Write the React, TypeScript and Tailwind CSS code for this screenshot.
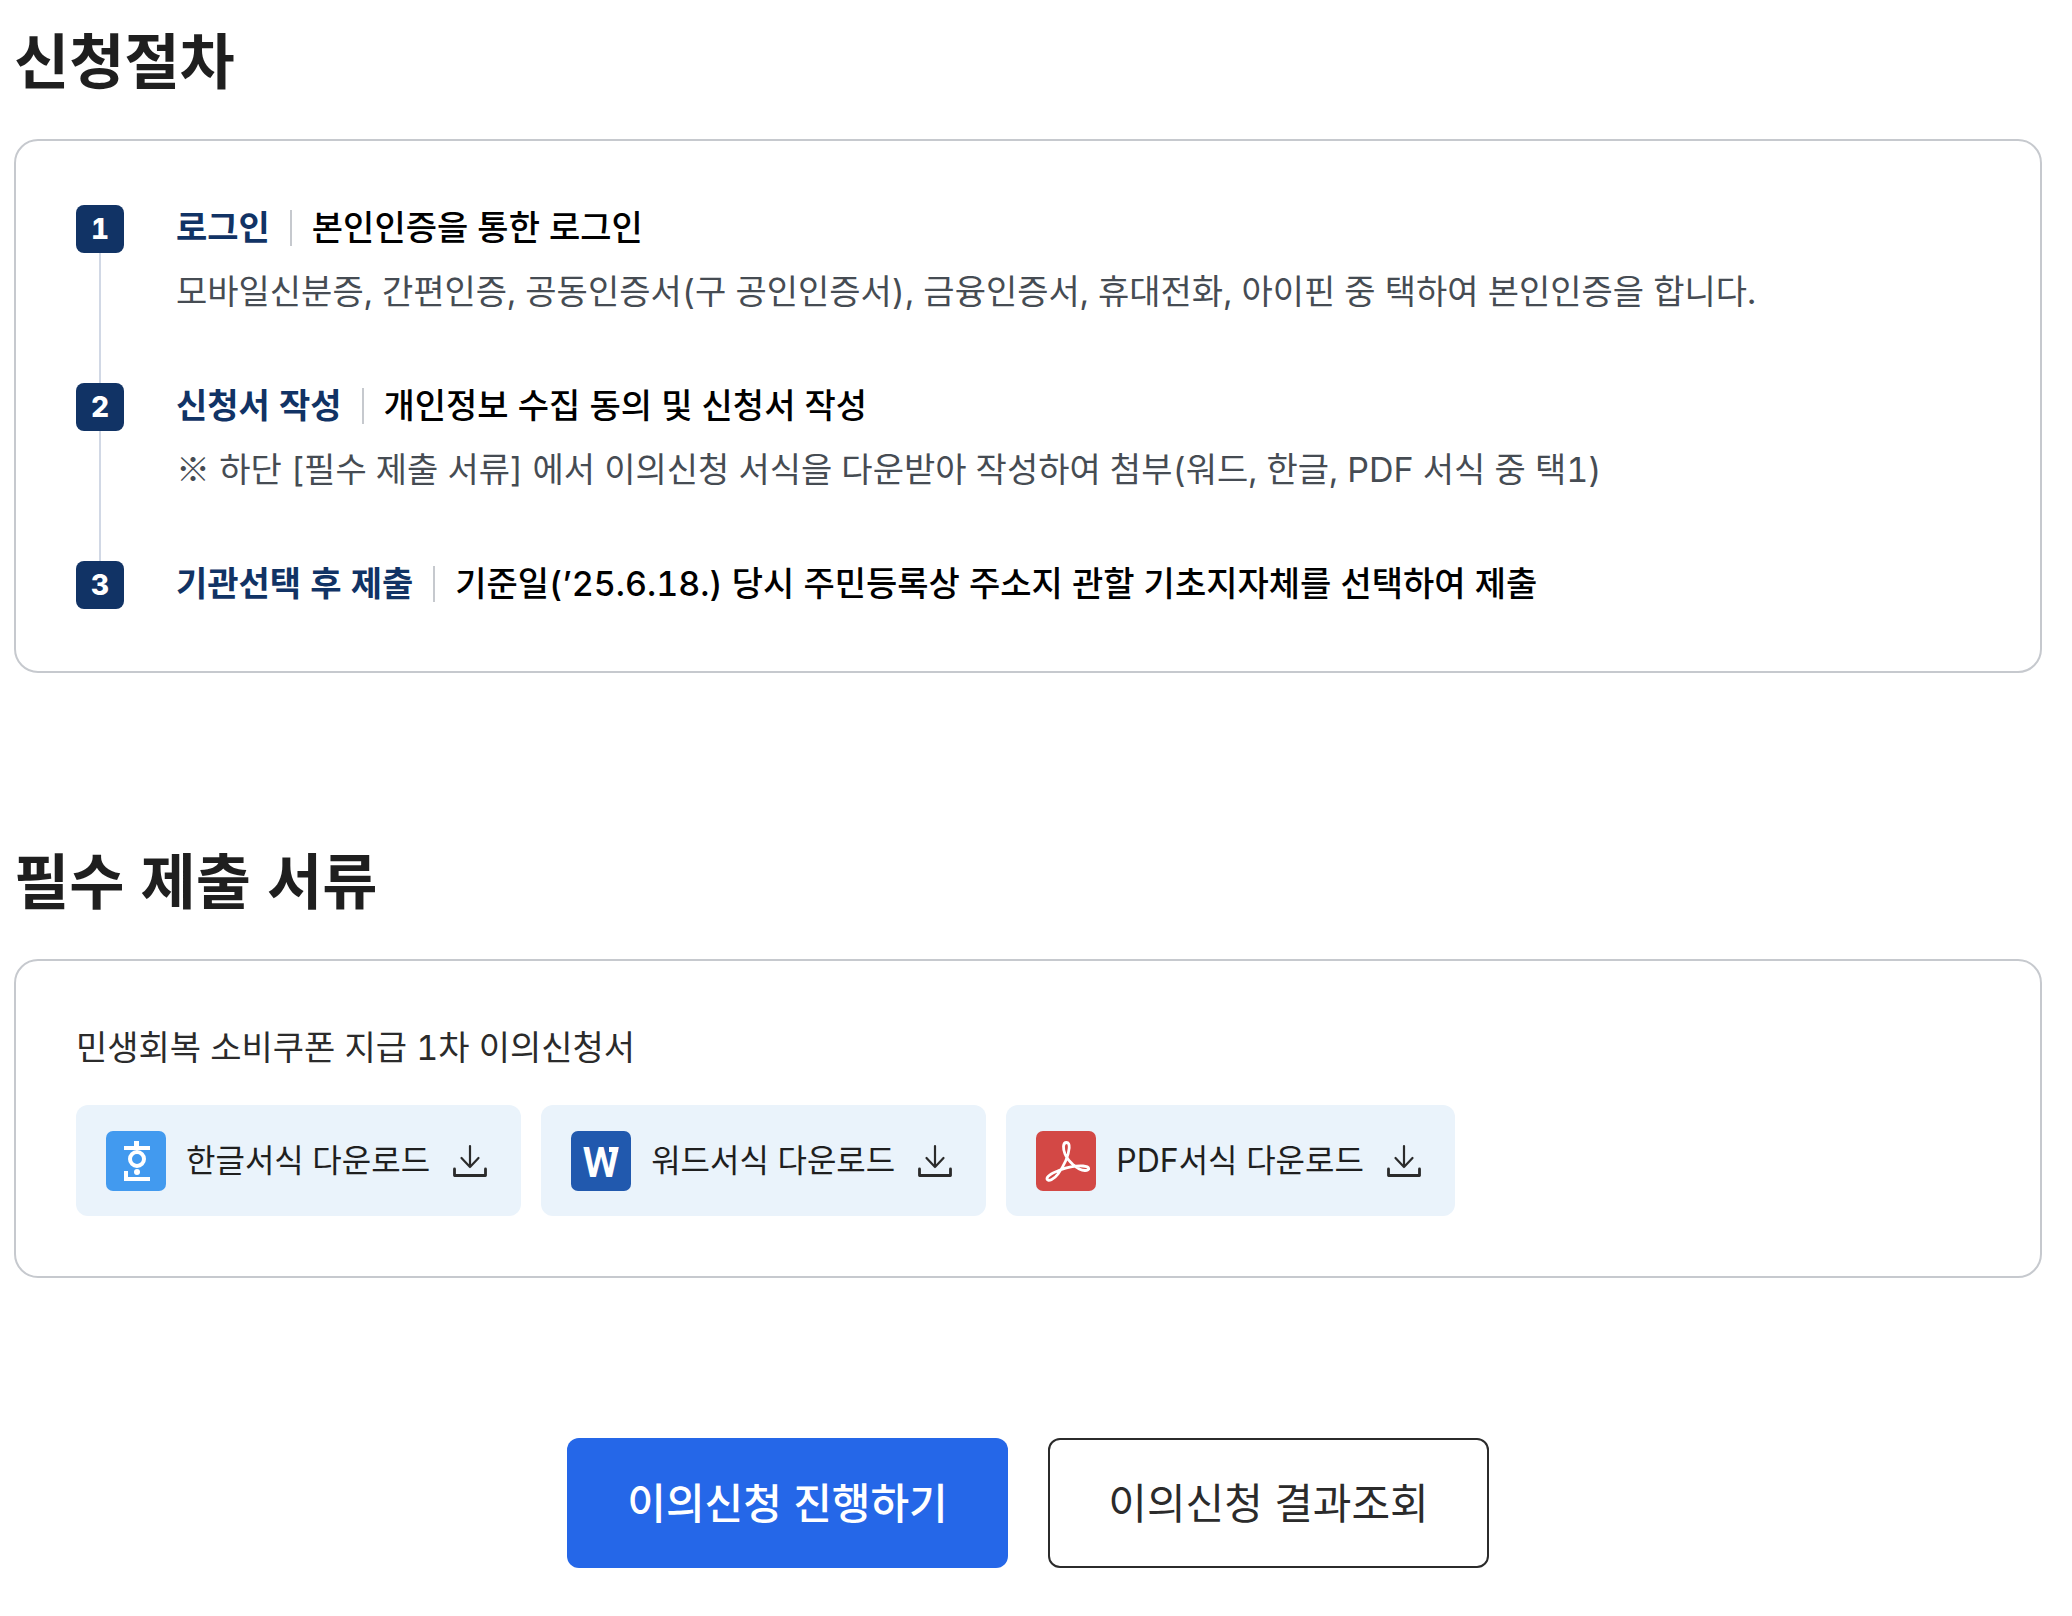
import type { ReactNode } from "react";

const steps = [
  {
    label: "로그인",
    title: "본인인증을 통한 로그인",
    desc: "모바일신분증, 간편인증, 공동인증서(구 공인인증서), 금융인증서, 휴대전화, 아이핀 중 택하여 본인인증을 합니다.",
  },
  {
    label: "신청서 작성",
    title: "개인정보 수집 동의 및 신청서 작성",
    desc: (
      <>
        <span className="font-['Noto_Sans_CJK_KR',sans-serif] leading-none">※</span> 하단 [필수 제출 서류] 에서 이의신청 서식을
        다운받아 작성하여 첨부(워드, 한글, PDF 서식 중 택1)
      </>
    ),
  },
  {
    label: "기관선택 후 제출",
    title: "기준일(’25.6.18.) 당시 주민등록상 주소지 관할 기초지자체를 선택하여 제출",
  },
];

const files = [
  { name: "한글서식 다운로드", icon: <HwpIcon /> },
  { name: "워드서식 다운로드", icon: <WordIcon /> },
  { name: "PDF서식 다운로드", icon: <PdfIcon /> },
];

function HwpIcon() {
  return (
    <svg viewBox="0 0 60 60" className="size-[60px] shrink-0" fill="none" aria-hidden="true">
      <rect width="60" height="60" rx="7" fill="#429aef" />
      <g fill="#fff">
        <rect x="28" y="10" width="5" height="6" />
        <rect x="18" y="15" width="26" height="4" />
        <circle cx="31" cy="41" r="3" />
        <rect x="18" y="40" width="4" height="10" />
        <rect x="18" y="46" width="26" height="4" />
      </g>
      <circle cx="31" cy="28" r="7" stroke="#fff" strokeWidth="4" />
    </svg>
  );
}

function WordIcon() {
  return (
    <svg viewBox="0 0 60 60" className="size-[60px] shrink-0" aria-hidden="true">
      <rect width="60" height="60" rx="7" fill="#2159ae" />
      <text x="30" y="46" textAnchor="middle" fill="#fff" className="font-['Roboto'] text-[42px] font-semibold">
        W
      </text>
      <rect x="38" y="16" width="9" height="5" fill="#fff" />
    </svg>
  );
}

function PdfIcon() {
  return (
    <svg viewBox="0 0 60 60" className="size-[60px] shrink-0" fill="none" aria-hidden="true">
      <rect width="60" height="60" rx="7" fill="#d34845" />
      <path
        d="M30.500 11.500C26.500 11.500 27 18 29 23c3 7 12 16 20 16.500 5.500 0 5-4-2-4.500-7-.5-16 1.500-23 4-8 3-13.500 6.500-13 9 1 3 7 .5 11-5 5-7 10.500-18 11.200-26 .3-3.500-.7-5.500-2.700-5.500z"
        stroke="#fff"
        strokeWidth="2.800"
        strokeLinejoin="round"
      />
    </svg>
  );
}

function DownloadIcon() {
  return (
    <svg viewBox="0 0 40 40" className="size-10 shrink-0" fill="none" stroke="#2b2b2b" strokeWidth="2.200" strokeLinecap="round" strokeLinejoin="round" aria-hidden="true">
      <path d="M20 5v21M11.500 17l8.500 9 8.500-9" />
      <path d="M4.500 28v6.500h31V28" strokeWidth="2.800" />
    </svg>
  );
}

function Section({ title, children }: { title: string; children: ReactNode }) {
  return (
    <section>
      <h2 className="mb-[34px] text-[60px] leading-[86px] font-bold text-[#1f1f1f]">{title}</h2>
      <div className="rounded-3xl border-2 border-[#c6c9ce] p-[60px]">{children}</div>
    </section>
  );
}

export default function App() {
  return (
    <main className="min-h-screen bg-white pt-[19px] pr-[30px] pb-12 pl-[14px] font-['Inter','Noto_Sans_CJK_KR',sans-serif] tabular-nums">
      <div className="flex flex-col gap-[166px]">
        <Section title="신청절차">
          <ol>
            {steps.map((step, i) => (
              <li key={step.label} className="flex gap-[52px]">
                <div className="flex w-12 flex-col items-center">
                  <span className="mt-1 flex size-12 shrink-0 items-center justify-center rounded-lg bg-[#113365] text-[28px] leading-none font-extrabold text-white">
                    {i + 1}
                  </span>
                  {i < steps.length - 1 && <span className="-mb-1 w-[2px] grow bg-[#d1d8e5]" />}
                </div>
                <div className={i < steps.length - 1 ? "pb-[60px]" : ""}>
                  <div className="flex items-center gap-5 text-[34px] leading-[54px]">
                    <strong className="font-bold text-[#113365]">{step.label}</strong>
                    <span className="h-9 w-[2px] bg-[#c6c9ce]" />
                    <span className="font-medium text-black">{step.title}</span>
                  </div>
                  {step.desc && <p className="mt-[10px] text-[34px] leading-[54px] text-[#464c53]">{step.desc}</p>}
                </div>
              </li>
            ))}
          </ol>
        </Section>

        <Section title="필수 제출 서류">
          <p className="text-[34px] leading-[54px] text-[#2b2b2b]">민생회복 소비쿠폰 지급 1차 이의신청서</p>
          <div className="mt-[30px] flex flex-wrap gap-5">
            {files.map((file) => (
              <button
                key={file.name}
                type="button"
                className="flex h-[111px] cursor-pointer items-center gap-5 rounded-xl bg-[#eaf3fb] pr-[31px] pl-[30px] text-[32px] text-[#1f1f1f]"
              >
                {file.icon}
                {file.name}
                <DownloadIcon />
              </button>
            ))}
          </div>
        </Section>
      </div>

      <div className="mt-40 flex flex-wrap justify-center gap-10 text-[42px]">
        <button type="button" className="h-[130px] min-w-[441px] cursor-pointer rounded-xl bg-[#2567e8] px-14 font-medium text-white">
          이의신청 진행하기
        </button>
        <button type="button" className="h-[130px] min-w-[441px] cursor-pointer rounded-xl border-2 border-[#2b2b2b] bg-white px-14 text-[#2b2b2b]">
          이의신청 결과조회
        </button>
      </div>
    </main>
  );
}
